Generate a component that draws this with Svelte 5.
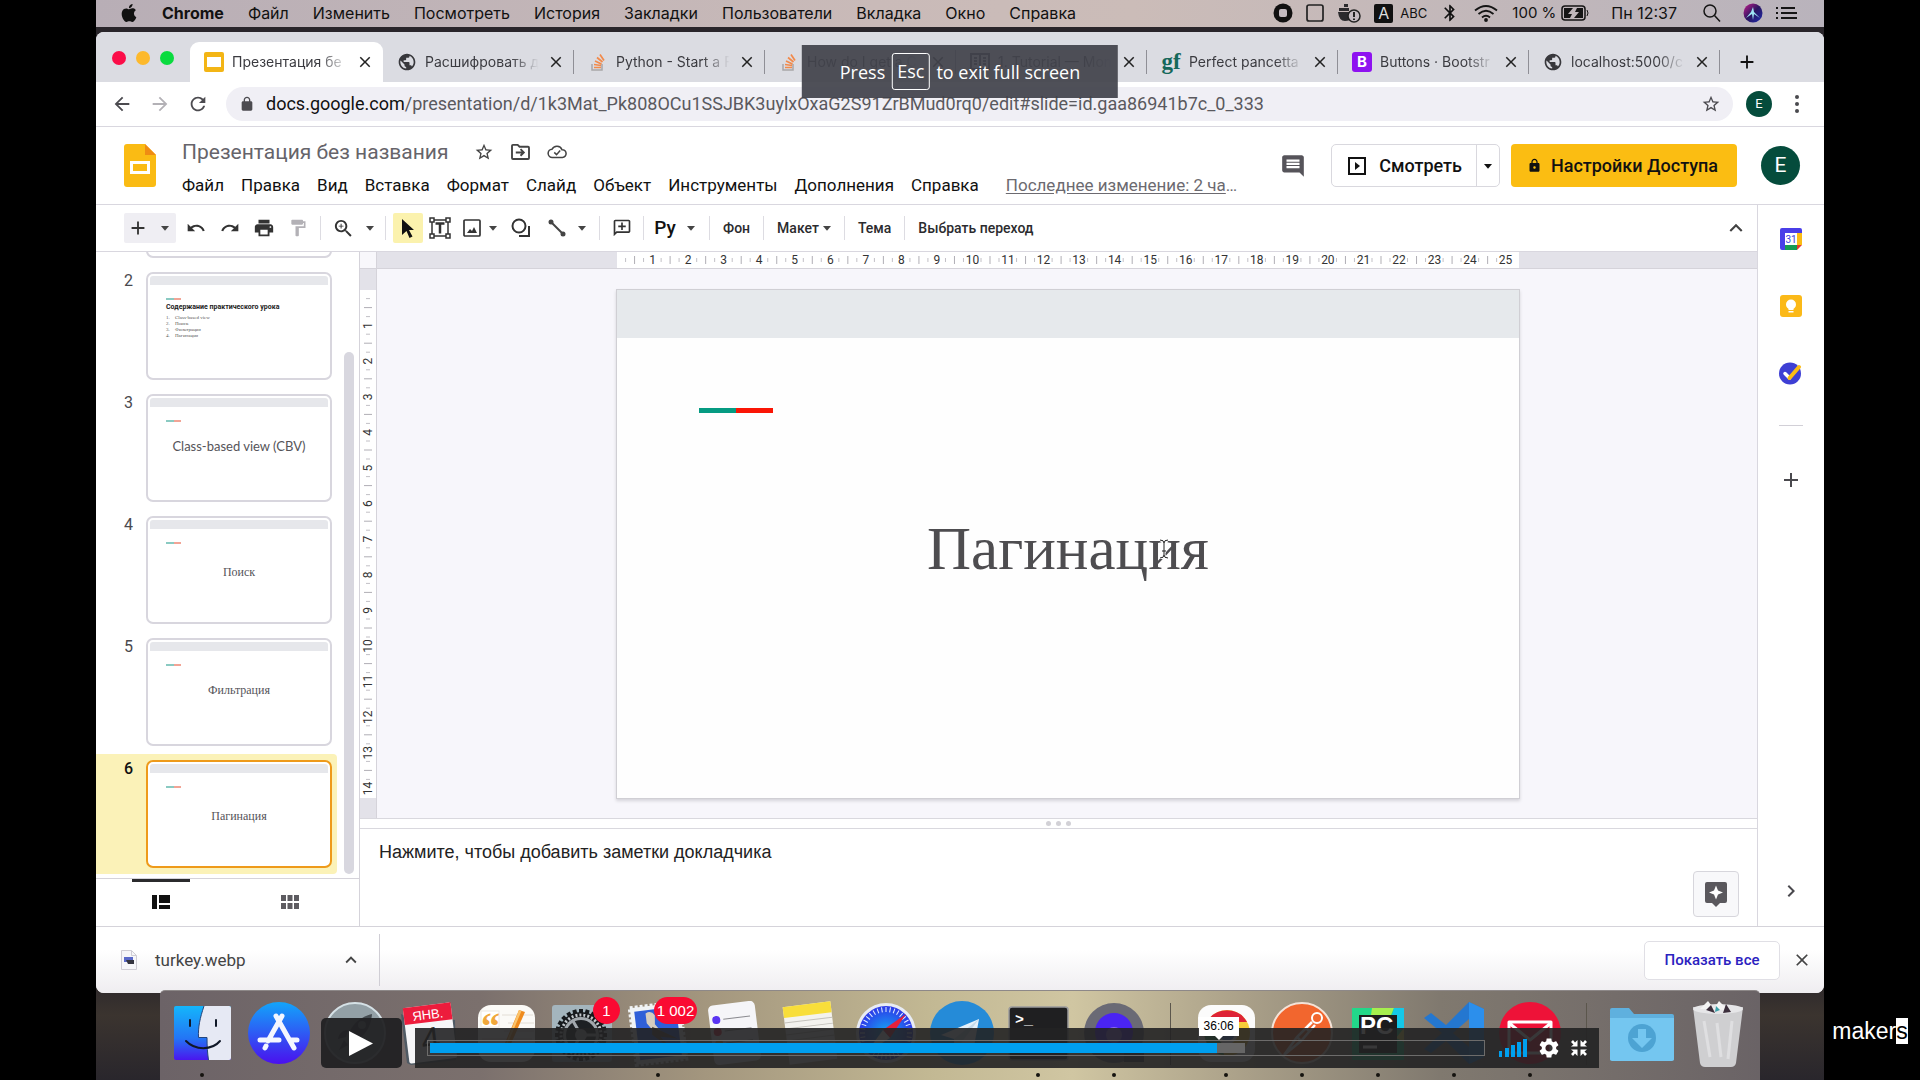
<script>
  const P = {
    star: 'M22 9.24l-7.19-.62L12 2 9.19 8.63 2 9.24l5.46 4.73L5.82 21 12 17.27 18.18 21l-1.63-7.03L22 9.24zM12 15.4l-3.76 2.27 1-4.28-3.32-2.88 4.38-.38L12 6.1l1.71 4.04 4.38.38-3.32 2.88 1 4.28L12 15.4z',
    back: 'M20 11H7.83l5.59-5.59L12 4l-8 8 8 8 1.41-1.41L7.83 13H20v-2z',
    forward: 'M12 4l-1.41 1.41L16.17 11H4v2h12.17l-5.58 5.59L12 20l8-8z',
    reload: 'M17.65 6.35C16.2 4.9 14.21 4 12 4c-4.42 0-7.99 3.58-7.99 8s3.57 8 7.99 8c3.73 0 6.84-2.55 7.73-6h-2.08c-.82 2.33-3.04 4-5.65 4-3.31 0-6-2.69-6-6s2.69-6 6-6c1.66 0 3.14.69 4.22 1.78L13 11h7V4l-2.35 2.35z',
    lock: 'M18 8h-1V6c0-2.76-2.24-5-5-5S7 3.24 7 6v2H6c-1.1 0-2 .9-2 2v10c0 1.1.9 2 2 2h12c1.1 0 2-.9 2-2V10c0-1.1-.9-2-2-2zM9 8V6c0-1.66 1.34-3 3-3s3 1.34 3 3v2H9z',
    lockHole: 'M18 8h-1V6c0-2.76-2.24-5-5-5S7 3.24 7 6v2H6c-1.1 0-2 .9-2 2v10c0 1.1.9 2 2 2h12c1.1 0 2-.9 2-2V10c0-1.1-.9-2-2-2zM9 8V6c0-1.66 1.34-3 3-3s3 1.34 3 3v2H9zm3 9c-1.1 0-2-.9-2-2s.9-2 2-2 2 .9 2 2-.9 2-2 2z',
    close: 'M19 6.41L17.59 5 12 10.59 6.41 5 5 6.41 10.59 12 5 17.59 6.41 19 12 13.41 17.59 19 19 17.59 13.41 12z',
    add: 'M19 13h-6v6h-2v-6H5v-2h6V5h2v6h6v2z',
    undo: 'M12.5 8c-2.65 0-5.05.99-6.9 2.6L2 7v9h9l-3.62-3.62c1.39-1.16 3.16-1.88 5.12-1.88 3.54 0 6.55 2.31 7.6 5.5l2.37-.78C21.08 11.03 17.15 8 12.5 8z',
    redo: 'M18.4 10.6C16.55 8.99 14.15 8 11.5 8c-4.65 0-8.58 3.03-9.96 7.22L3.9 16c1.05-3.19 4.05-5.5 7.6-5.5 1.95 0 3.73.72 5.12 1.88L13 16h9V7l-3.6 3.6z',
    print: 'M19 8H5c-1.66 0-3 1.34-3 3v6h4v4h12v-4h4v-6c0-1.66-1.34-3-3-3zm-3 11H8v-5h8v5zm3-7c-.55 0-1-.45-1-1s.45-1 1-1 1 .45 1 1-.45 1-1 1zm-1-9H6v4h12V3z',
    paint: 'M18 4V3c0-.55-.45-1-1-1H5c-.55 0-1 .45-1 1v4c0 .55.45 1 1 1h12c.55 0 1-.45 1-1V6h1v4H9v11c0 .55.45 1 1 1h2c.55 0 1-.45 1-1v-9h8V4h-3z',
    zoom: 'M15.5 14h-.79l-.28-.27C15.41 12.59 16 11.11 16 9.5 16 5.91 13.09 3 9.5 3S3 5.91 3 9.5 5.91 16 9.5 16c1.61 0 3.09-.59 4.23-1.57l.27.28v.79l5 4.99L20.49 19l-4.99-5zm-6 0C7.01 14 5 11.99 5 9.5S7.01 5 9.5 5 14 7.01 14 9.5 11.99 14 9.5 14zm2.5-4h-2v2H9v-2H7V9h2V7h1v2h2v1z',
    comment: 'M21.99 4c0-1.1-.89-2-1.99-2H4c-1.1 0-2 .9-2 2v12c0 1.1.9 2 2 2h14l4 4-.01-18zM18 14H6v-2h12v2zm0-3H6V9h12v2zm0-3H6V6h12v2z',
    addComment: 'M20 2H4c-1.1 0-2 .9-2 2v18l4-4h14c1.1 0 2-.9 2-2V4c0-1.1-.9-2-2-2zm0 14H5.2L4 17.2V4h16v12zM11 5.500h2V9h3.500v2H13v3.500h-2V11H7.500V9H11z',
    up: 'M12 8l-6 6 1.41 1.41L12 10.83l4.59 4.58L18 14z',
    right: 'M10 6L8.59 7.41 13.17 12l-4.58 4.59L10 18l6-6z',
    caret: 'M6 9l6 7 6-7z',
    globe: 'M12 2C6.48 2 2 6.48 2 12s4.48 10 10 10 10-4.48 10-10S17.52 2 12 2zm-1 17.93c-3.95-.49-7-3.85-7-7.93 0-.62.08-1.21.21-1.79L9 15v1c0 1.1.9 2 2 2v1.93zm6.9-2.54c-.26-.81-1-1.39-1.9-1.39h-1v-3c0-.55-.45-1-1-1H8v-2h2c.55 0 1-.45 1-1V7h2c1.1 0 2-.9 2-2v-.41c2.93 1.19 5 4.06 5 7.41 0 2.08-.8 3.97-2.1 5.39z',
    bluetooth: 'M17.71 7.71L12 2h-1v7.59L6.41 5 5 6.41 10.59 12 5 17.59 6.41 19 11 14.41V22h1l5.71-5.71-4.3-4.29 4.3-4.29zM13 5.83l1.88 1.88L13 9.59V5.83zm1.88 10.46L13 18.17v-3.76l1.88 1.88z',
    gear: 'M19.14 12.94c.04-.3.06-.61.06-.94 0-.32-.02-.64-.07-.94l2.03-1.58c.18-.14.23-.41.12-.61l-1.92-3.32c-.12-.22-.37-.29-.59-.22l-2.39.96c-.5-.38-1.03-.7-1.62-.94l-.36-2.54c-.04-.24-.24-.41-.48-.41h-3.84c-.24 0-.43.17-.47.41l-.36 2.54c-.59.24-1.13.57-1.62.94l-2.39-.96c-.22-.08-.47 0-.59.22L2.74 8.87c-.12.21-.08.47.12.61l2.03 1.58c-.05.3-.09.63-.09.94s.02.64.07.94l-2.03 1.58c-.18.14-.23.41-.12.61l1.92 3.32c.12.22.37.29.59.22l2.39-.96c.5.38 1.03.7 1.62.94l.36 2.54c.05.24.24.41.48.41h3.84c.24 0 .44-.17.47-.41l.36-2.54c.59-.24 1.13-.56 1.62-.94l2.39.96c.22.08.47 0 .59-.22l1.92-3.32c.12-.22.07-.47-.12-.61l-2.01-1.58zM12 15.6c-1.98 0-3.6-1.62-3.6-3.6s1.62-3.6 3.6-3.6 3.6 1.62 3.6 3.6-1.62 3.6-3.6 3.6z',
    apple: 'M12.152 6.896c-.948 0-2.415-1.078-3.96-1.04-2.04.027-3.91 1.183-4.961 3.014-2.117 3.675-.546 9.103 1.519 12.09 1.013 1.454 2.208 3.09 3.792 3.039 1.52-.065 2.09-.987 3.935-.987 1.831 0 2.35.987 3.96.948 1.637-.026 2.676-1.48 3.676-2.948 1.156-1.688 1.636-3.325 1.662-3.415-.039-.013-3.182-1.221-3.22-4.857-.026-3.04 2.48-4.494 2.597-4.559-1.429-2.09-3.623-2.324-4.39-2.376-2-.156-3.675 1.09-4.61 1.09zM15.53 3.83c.843-1.012 1.4-2.427 1.245-3.83-1.207.052-2.662.805-3.532 1.818-.78.896-1.454 2.338-1.273 3.714 1.338.104 2.715-.688 3.559-1.701'
  };

  const macMenus = ['Файл', 'Изменить', 'Посмотреть', 'История', 'Закладки', 'Пользователи', 'Вкладка', 'Окно', 'Справка'];
  const docMenus = ['Файл', 'Правка', 'Вид', 'Вставка', 'Формат', 'Слайд', 'Объект', 'Инструменты', 'Дополнения', 'Справка'];

  const tabs = [
    { icon: 'slides', title: 'Презентация бе', active: true },
    { icon: 'globe', title: 'Расшифровать д' },
    { icon: 'stack', title: 'Python - Start a F' },
    { icon: 'stack', title: 'How do I get a C' },
    { icon: 'docs', title: '1. Tutorial — Mon' },
    { icon: 'gf', title: 'Perfect pancetta' },
    { icon: 'boot', title: 'Buttons · Bootstr' },
    { icon: 'globe', title: 'localhost:5000/c' }
  ];

  const slides = [
    { n: 1, text: '' },
    { n: 2, list: ['Class-based view', 'Поиск', 'Фильтрация', 'Пагинация'], heading: 'Содержание практического урока' },
    { n: 3, text: 'Class-based view (CBV)', sans: true, raised: true },
    { n: 4, text: 'Поиск' },
    { n: 5, text: 'Фильтрация', raised: true },
    { n: 6, text: 'Пагинация', selected: true }
  ];

  const dock = [
    { k: 'finder', dot: true }, { k: 'appstore' }, { k: 'launchpad' }, { k: 'calendar' }, { k: 'pages' },
    { k: 'settings', badge: '1' }, { k: 'mail', badge: '1 002', dot: true }, { k: 'reminders' }, { k: 'notes' },
    { k: 'safari' }, { k: 'telegram' }, { k: 'terminal', dot: true }, { k: 'quicktime', dot: true }, { k: 'sep' },
    { k: 'chrome', dot: true }, { k: 'postman', dot: true }, { k: 'pycharm', dot: true }, { k: 'vscode', dot: true },
    { k: 'spark', dot: true }, { k: 'sep' }, { k: 'folder' }, { k: 'trash' }
  ];

  const CM = 35.6;
  const hTicks = Array.from({ length: 25 }, (_, i) => i + 1);
  const vTicks = Array.from({ length: 14 }, (_, i) => i + 1);
  const spokes = Array.from({ length: 36 }, (_, i) => i * 10);
  const teeth = Array.from({ length: 24 }, (_, i) => i * 15);

  let position = $state(748);
  const loaded = 775;
</script>

{#snippet icon(d, size)}
  <svg class="ico" width={size} height={size} viewBox="0 0 24 24" aria-hidden="true"><path {d} fill="currentColor" fill-rule="evenodd" /></svg>
{/snippet}

{#snippet caret()}
  <svg class="ico" width="16" height="16" viewBox="0 0 24 24" aria-hidden="true"><path d={P.caret} fill="#444" /></svg>
{/snippet}

{#snippet favicon(kind)}
  {#if kind === 'slides'}
    <svg width="20" height="20" viewBox="0 0 20 20"><rect width="20" height="20" rx="2" fill="#f3b515" /><rect x="3" y="5" width="14" height="10" fill="#fff" /></svg>
  {:else if kind === 'globe'}
    <span class="globe">{@render icon(P.globe, 20)}</span>
  {:else if kind === 'stack'}
    <svg width="20" height="20" viewBox="0 0 20 20" fill="none"><path d="M4 12v6h10v-6" stroke="#a9a6a8" stroke-width="1.500" /><path d="M6 15.500h7M6 12.500l7 1M7 9l6.500 3M9 5.500l5.500 4.500M12 2.500l4 6" stroke="#f28a4b" stroke-width="1.700" /></svg>
  {:else if kind === 'docs'}
    <svg width="20" height="20" viewBox="0 0 20 20" fill="none" stroke="#2b3038" stroke-width="2"><path d="M1 2h18v15H1zM10 2v16M4 6h3M4 9h3M4 12h3M13 6h3M13 9h3M13 12h3" /></svg>
  {:else if kind === 'gf'}
    <span class="gf">gf</span>
  {:else}
    <span class="boot">B</span>
  {/if}
{/snippet}

{#snippet dockArt(k)}
  <svg width="64" height="66" viewBox="0 0 64 66" aria-hidden="true">
    {#if k === 'finder'}
      <rect x="4" y="5" width="57" height="54" rx="2" fill="url(#gFinder)" />
      <path d="M34 5c-4 12-6 21-5.500 31.500H37c0 9 .5 16 1.500 22.500H59a2 2 0 0 0 2-2V7a2 2 0 0 0-2-2z" fill="#e6e9f4" />
      <path d="M34 5c-4 12-6 21-5.500 31.500H37c0 9 .5 16 1.500 22.500" fill="none" stroke="#24457c" />
      <path d="M20 19v6M46 19v6M16 40c9 9.500 26 9.500 34 0" stroke="#101828" stroke-width="2" fill="none" stroke-linecap="round" />
    {:else if k === 'appstore'}
      <circle cx="33" cy="32" r="31" fill="url(#gStore)" />
      <g stroke="#f4f6ff" stroke-width="5" stroke-linecap="round"><path d="M36 15L22 40M30 15l18 32M14 39h19M44 39h7M20 45l-1 2" /></g>
    {:else if k === 'launchpad'}
      <circle cx="33" cy="32" r="30" fill="#93a0a6" stroke="#d5e1e6" stroke-width="2" />
      <path d="M50 13C38 16 31 23 27 32l7 7c9-4 15-13 16-26zM26 29c-6 0-9 4-10 9l8-2zM37 40c0 6-4 9-9 10l2-8zM22 39l-5 10 9-5z" fill="#454b50" />
      <circle cx="40" cy="24" r="4" fill="#93a0a6" />
    {:else if k === 'calendar'}
      <path d="M5 14l-2-1 6 49 4 2 45-5-1-40z" fill="#4f5a64" />
      <g transform="rotate(-7 32 32)"><rect x="8" y="4" width="48" height="56" rx="2" fill="#f6f6f8" /><path d="M8 4h48v17H8z" fill="#ed1c3c" /><text x="32" y="18" font-size="13" text-anchor="middle" fill="#fff">ЯНВ.</text><text x="32" y="50" font-size="34" text-anchor="middle" fill="#222">4</text></g>
    {:else if k === 'pages'}
      <rect x="4" y="4" width="57" height="57" rx="13" fill="#fbfaf7" />
      <path d="M28 14h31M34 22h26M30 30h30M8 38h50M8 46h50" stroke="#e3ded6" />
      <rect x="7" y="10" width="18" height="16" fill="#fff" stroke="#ece7df" />
      <text x="7" y="38" font-size="38" font-weight="700" fill="#f0a73a" class="quote">“</text>
      <path d="M45 9l6 2-15 34-5 4v-7z" fill="#ef8b1e" /><path d="M45 9l2.500 1L33 44l-2 1z" fill="#fbc46c" />
    {:else if k === 'settings'}
      <rect x="2" y="4" width="60" height="57" rx="3" fill="#a4b5bd" />
      <g fill="#16191c"><circle cx="31" cy="34" r="23" />{#each teeth as t}<path d="M29 8h4v6h-4z" transform="rotate({t} 31 34)" />{/each}</g>
      <circle cx="31" cy="34" r="20" fill="none" stroke="#c3c8cc" stroke-width="3" stroke-dasharray="2 2" />
      <circle cx="31" cy="34" r="18" fill="#a2a8ad" /><circle cx="31" cy="34" r="15" fill="#1d2023" />
      <g stroke="#a2a8ad" stroke-width="3"><path d="M31 34l-8-14M31 34h16M31 34l-8 14" /></g><circle cx="31" cy="34" r="6" fill="#a2a8ad" />
    {:else if k === 'mail'}
      <g transform="rotate(-7 32 32)"><rect x="7" y="4" width="50" height="57" fill="#f0f3f5" stroke="#f0f3f5" stroke-width="4" stroke-dasharray="3 2" /><rect x="11" y="8" width="42" height="49" fill="#2f5fd8" /><path d="M22 11q6-3 9 3l-1 9 6 9-8-2-6-9z" fill="#d6cdbf" /><path d="M27 25l24 15-17-4 10 14-18-17z" fill="#5a4d40" /></g>
    {:else if k === 'reminders'}
      <g transform="rotate(-7 32 32)"><rect x="9" y="2" width="47" height="60" rx="5" fill="#f5f5f8" /><path d="M23 17h27M23 29h27M23 41h27" stroke="#8b8b90" /><circle cx="16" cy="17" r="4" fill="#5a34f2" /><circle cx="16" cy="29" r="4" fill="#e8213c" /><circle cx="16" cy="41" r="4" fill="#f2982c" /></g>
    {:else if k === 'notes'}
      <g transform="rotate(-7 32 32)"><rect x="8" y="3" width="48" height="58" fill="#f3f2ee" /><path d="M8 3h48v11H8z" fill="#f8de3a" /><path d="M8 19h48M8 25h48M8 31h48M8 37h48M8 43h48M8 49h48" stroke="#c3c1bb" /></g>
    {:else if k === 'safari'}
      <circle cx="32" cy="32" r="30" fill="#e8ecf4" /><circle cx="32" cy="32" r="27" fill="url(#gSafari)" />
      {#each spokes as s}<path d="M32 6v5" stroke="#e2ecff" transform="rotate({s} 32 32)" />{/each}
      <path d="M52 13L36 37l-7-8z" fill="#e5203c" /><path d="M12 52l17-23 7 8z" fill="#eef1f7" />
    {:else if k === 'telegram'}
      <circle cx="32" cy="32" r="32" fill="#258bd8" /><path d="M11 34l38-16-6 33-12-9-6 6-1-10z" fill="#e4f0fa" /><path d="M24 38l25-20-18 24-6 6z" fill="#c3d9ea" />
    {:else if k === 'terminal'}
      <rect x="3" y="6" width="59" height="53" rx="3" fill="#1f1f21" stroke="#9a9a9c" stroke-width="1.500" /><text x="9" y="23" font-size="15" font-weight="700" fill="#fff" class="mono">&gt;_</text>
    {:else if k === 'quicktime'}
      <circle cx="32" cy="32" r="30" fill="#6a6a75" /><path d="M42 44h20v17H42z" fill="#4a4a50" /><circle cx="32" cy="31" r="19" fill="#4a24f2" /><circle cx="32" cy="34" r="8" fill="#8c6cf0" />
    {:else if k === 'chrome'}
      <rect x="4" y="4" width="57" height="57" rx="13" fill="#fbfbfb" /><circle cx="33" cy="32" r="23" fill="#f7cd3a" /><path d="M13 21a23 23 0 0 1 40 0H33z" fill="#de2436" /><path d="M11 25l15 12 4 17A23 23 0 0 1 11 25z" fill="#2e9b57" /><circle cx="33" cy="32" r="11" fill="#fff" /><circle cx="33" cy="32" r="8" fill="#4583ec" />
    {:else if k === 'postman'}
      <circle cx="32" cy="32" r="30" fill="#f2662e" stroke="#f4e3d8" stroke-width="2" /><circle cx="47" cy="17" r="5" fill="none" stroke="#fff" stroke-width="2" /><path d="M42 21L27 36l-13 18 17-14 14-16M27 36l4 4M36 27l4 4" fill="none" stroke="#fff" stroke-width="2.500" />
    {:else if k === 'pycharm'}
      <rect x="6" y="7" width="52" height="52" fill="#22d88a" /><path d="M26 7h22l-6 14H24z" fill="#a6ef4e" /><path d="M48 7h10v22H42z" fill="#14c8e8" /><path d="M58 27v14l-8-4z" fill="#f3e95c" /><rect x="13" y="14" width="38" height="38" fill="#1c1c1d" /><text x="14" y="33" font-size="24" font-weight="700" fill="#fff">PC</text><path d="M17 46h14" stroke="#fff" stroke-width="3" />
    {:else if k === 'vscode'}
      <path d="M47 1l15 7v48l-15 7L24 40 9 52l-7-4 18-16L2 17l7-5 15 12zM47 18L31 32l16 14z" fill="#2477d0" fill-rule="evenodd" /><path d="M47 1l15 7v48l-15 7z" fill="#2c8fec" />
    {:else if k === 'spark'}
      <circle cx="32" cy="32" r="31" fill="#ee1238" /><path d="M11 21h42v31H11zM11 22l21 17 21-17" fill="none" stroke="#fff" stroke-width="3" stroke-linejoin="round" />
    {:else if k === 'folder'}
      <path d="M0 9q0-2 2-2h17l5 6h38q2 0 2 2v44H0z" fill="#5fb0de" /><path d="M0 17h64v41q0 2-2 2H2q-2 0-2-2z" fill="#74c6f0" /><circle cx="32" cy="37" r="14" fill="#4da3d3" /><path d="M28 28h8v9h6L32 47 22 37h6z" fill="#74c6f0" />
    {:else}
      <path d="M7 6h50l-7 56q-1 4-5 4H19q-4 0-5-4z" fill="#cfcfd1" /><ellipse cx="32" cy="8" rx="25" ry="5" fill="#e6e6e8" /><path d="M14 8l8-8 6 8 5-8 9 9z" fill="#f4f4f4" /><path d="M20 9l5-5 4 8zM40 3l5 8-8 1z" fill="#3c2f3c" /><path d="M30 5l4 4-5 2z" fill="#3da0a8" /><path d="M18 20l6 36M46 20l-4 38M31 22l4 34" stroke="#e6e6e8" stroke-width="3" opacity=".7" />
    {/if}
  </svg>
{/snippet}

<svg class="defs" width="0" height="0" aria-hidden="true">
  <defs>
    <linearGradient id="gFinder" x1="0" y1="0" x2="0" y2="1"><stop offset="0" stop-color="#14b6fb" /><stop offset=".6" stop-color="#2375f5" /><stop offset="1" stop-color="#4a16ee" /></linearGradient>
    <linearGradient id="gStore" x1="0" y1="0" x2="0" y2="1"><stop offset="0" stop-color="#12a5fa" /><stop offset="1" stop-color="#4a10ee" /></linearGradient>
    <radialGradient id="gSafari"><stop offset="0" stop-color="#16a9f5" /><stop offset="1" stop-color="#2c39e8" /></radialGradient>
    <linearGradient id="gSiri" x1="0" y1="0" x2="1" y2="1"><stop offset="0" stop-color="#c81e8e" /><stop offset=".5" stop-color="#2a1560" /><stop offset="1" stop-color="#1e2cb0" /></linearGradient>
  </defs>
</svg>

<div class="stage">
  <div class="desktop">
    <nav class="menubar">
      <span class="apple">{@render icon(P.apple, 18)}</span>
      <b>Chrome</b>
      {#each macMenus as m}<span>{m}</span>{/each}
      <div class="status">
        <svg width="20" height="20" viewBox="0 0 20 20"><circle cx="10" cy="10" r="9.500" fill="#111" /><rect x="6" y="6" width="8" height="8" rx="2" fill="#c4bbc1" /></svg>
        <svg width="18" height="18" viewBox="0 0 18 18"><rect x="1" y="1" width="16" height="16" rx="2" fill="none" stroke="#222" stroke-width="1.700" /></svg>
        <svg class="docker" width="24" height="20" viewBox="0 0 24 20"><path d="M1 9h14v6q-2 3-7 3-6 0-7-9zM2 5h10v3H2zM7 1h4v3H7z" fill="#2b2a2d" /><circle cx="17" cy="13" r="6" fill="#c4bbc1" stroke="#222" stroke-width="1.500" /><path d="M17 9v5M17 15.500v1.500" stroke="#222" stroke-width="2" /></svg>
        <span class="kbd"><i>A</i>ABC</span>
        {@render icon(P.bluetooth, 20)}
        <svg class="wifi" width="26" height="20" viewBox="0 0 26 20" fill="none" stroke="#151515" stroke-width="1.800"><path d="M2 7.500q11-9 22 0M5.500 11q7.500-6.500 15 0M9 14.500q4-3.500 8 0" /><circle cx="13" cy="17" r="1" fill="#151515" /></svg>
        <span class="power">100 %<svg width="28" height="16" viewBox="0 0 28 16"><rect x="1" y="1" width="23" height="14" rx="3" fill="none" stroke="#151515" stroke-width="1.500" /><path d="M3 3h9L7 9h4l-2 4H3zM22 13h-9L18 7h-4l2-4h6z" fill="#151515" /><path d="M26 5q2 3 0 6" stroke="#151515" fill="none" /></svg></span>
        <span class="clock">Пн 12:37</span>
        <svg class="find" width="20" height="20" viewBox="0 0 20 20" fill="none" stroke="#151515" stroke-width="1.500"><circle cx="8" cy="8" r="6" /><path d="M12.500 12.500l5.500 6" /></svg>
        <svg class="siri" width="20" height="20" viewBox="0 0 20 20"><circle cx="10" cy="10" r="9.500" fill="url(#gSiri)" /><path d="M3 15l5-6 2-5 1 5 6 6-6-4-1 6-1-6z" fill="#9fe4f4" /></svg>
        <svg width="22" height="14" viewBox="0 0 22 14" stroke="#151515" stroke-width="2"><path d="M0 2h2M5 2h14M0 7h2M5 7h16M0 12h2M5 12h16" /></svg>
      </div>
    </nav>

    <main class="window">
      <div class="tabstrip">
        <div class="lights"><i class="r"></i><i class="y"></i><i class="g"></i></div>
        {#each tabs as t}
          <div class="tab" class:active={t.active}>
            <span class="fav">{@render favicon(t.icon)}</span>
            <span class="ttl">{t.title}</span>
            <button class="bare" aria-label="Закрыть вкладку">{@render icon(P.close, 18)}</button>
          </div>
        {/each}
        <button class="bare newtab" aria-label="Новая вкладка">{@render icon(P.add, 22)}</button>
      </div>

      <div class="address">
        <button class="bare nav" aria-label="Назад">{@render icon(P.back, 22)}</button>
        <button class="bare nav dim" aria-label="Вперёд">{@render icon(P.forward, 22)}</button>
        <button class="bare nav" aria-label="Обновить">{@render icon(P.reload, 22)}</button>
        <div class="omni">
          {@render icon(P.lock, 16)}
          <a class="url" href="#url"><span>docs.google.com</span>/presentation/d/1k3Mat_Pk808OCu1SSJBK3uylxOxaG2S91ZrBMud0rq0/edit#slide=id.gaa86941b7c_0_333</a>
          <button class="bare" aria-label="Добавить в закладки">{@render icon(P.star, 20)}</button>
        </div>
        <button class="bare avatar small" aria-label="Профиль">E</button>
        <button class="bare dots" aria-label="Меню"><svg width="6" height="20" viewBox="0 0 6 20" fill="#4a4a4e"><circle cx="3" cy="3" r="2" /><circle cx="3" cy="10" r="2" /><circle cx="3" cy="17" r="2" /></svg></button>
      </div>

      <header class="dochead">
        <svg class="logo" width="32" height="43" viewBox="0 0 32 43"><path d="M3 0h18l11 11v29q0 3-3 3H3q-3 0-3-3V3q0-3 3-3z" fill="#fabb14" /><path d="M21 0l11 11H21z" fill="#ef8c13" /><path d="M7.500 18.500h17v10h-17z" fill="none" stroke="#fff" stroke-width="3" /></svg>
        <div class="names">
          <div class="titleline">
            <h1>Презентация без названия</h1>
            <button class="bare" aria-label="Пометить">{@render icon(P.star, 20)}</button>
            <button class="bare" aria-label="Переместить"><svg width="19" height="17" viewBox="0 0 20 18" fill="none" stroke="#444" stroke-width="2"><path d="M1 3q0-1 1-1h5l2 2h9q1 0 1 1v11q0 1-1 1H2q-1 0-1-1zM5 10h8M10 6.500l3.500 3.500-3.500 3.500" /></svg></button>
            <button class="bare" aria-label="Сохранено"><svg width="20" height="17" viewBox="0 0 22 18" fill="none" stroke="#444" stroke-width="1.700"><path d="M6 15.500a4.500 4.500 0 0 1-.5-9A6 6 0 0 1 16.500 7a4.200 4.200 0 0 1 .5 8.500zM8 10l2.500 2.500 4-4.500" /></svg></button>
          </div>
          <div class="menus">
            {#each docMenus as m}<button class="bare">{m}</button>{/each}
            <a href="#history"><u>Последнее изменение: 2 ча</u>…</a>
          </div>
        </div>
        <button class="bare commentbtn" aria-label="Комментарии">{@render icon(P.comment, 26)}</button>
        <div class="present">
          <button><svg width="18" height="18" viewBox="0 0 18 18"><rect x="1" y="1" width="16" height="16" fill="none" stroke="#111" stroke-width="2" /><path d="M7 5l5 4-5 4z" fill="#111" /></svg>Смотреть</button>
          <button class="more" aria-label="Варианты показа">{@render icon(P.caret, 16)}</button>
        </div>
        <button class="share">{@render icon(P.lockHole, 15)}Настройки Доступа</button>
        <button class="bare avatar" aria-label="Аккаунт">E</button>
      </header>

      <div class="docbody">
        <div class="work">
          <div class="toolbar">
            <div class="grp">
              <button class="bare new" aria-label="Новый слайд">{@render icon(P.add, 22)}{@render caret()}</button>
              <button class="bare t34" aria-label="Отменить">{@render icon(P.undo, 20)}</button>
              <button class="bare t34" aria-label="Повторить">{@render icon(P.redo, 20)}</button>
              <button class="bare t34" aria-label="Печать">{@render icon(P.print, 22)}</button>
              <button class="bare t34 dim" aria-label="Копировать форматирование">{@render icon(P.paint, 20)}</button>
            </div>
            <div class="grp g2">
              <button class="bare t34" aria-label="Масштаб">{@render icon(P.zoom, 23)}</button>
              <button class="bare t20" aria-label="Выбрать масштаб">{@render caret()}</button>
            </div>
            <div class="grp g3">
              <button class="bare sel" aria-label="Выбрать"><svg width="14" height="20" viewBox="0 0 14 20"><path d="M1 1l12 11H8l3.500 6.500-3 1.500L5.500 13 1 17z" fill="#111" /></svg></button>
              <button class="bare t34" aria-label="Текстовое поле"><svg width="22" height="22" viewBox="0 0 22 22" fill="none" stroke="#333" stroke-width="1.500"><path d="M3 3h16v16H3z" /><path d="M6.500 6.500h9M11 6.500v10" stroke-width="2.500" /><g fill="#fff"><path d="M1 1h4v4H1zM17 1h4v4h-4zM1 17h4v4H1zM17 17h4v4h-4z" /></g></svg></button>
              <button class="bare t30" aria-label="Изображение"><svg width="18" height="18" viewBox="0 0 18 18"><rect x="1" y="1" width="16" height="16" rx="1" fill="none" stroke="#333" stroke-width="1.700" /><path d="M4 14l3-4 2 2 2-4 3 6z" fill="#333" /></svg></button>
              <button class="bare t12" aria-label="Вставить изображение">{@render caret()}</button>
              <button class="bare t44" aria-label="Фигура"><svg width="20" height="20" viewBox="0 0 20 20" fill="none" stroke="#333" stroke-width="2"><circle cx="8" cy="8" r="6.500" /><path d="M18 8v10H8" /></svg></button>
              <button class="bare t30" aria-label="Линия"><svg width="18" height="18" viewBox="0 0 18 18"><path d="M3 3l12 12" stroke="#444" stroke-width="2" /><circle cx="3" cy="3" r="2.500" fill="#444" /><circle cx="15" cy="15" r="2.500" fill="#444" /></svg></button>
              <button class="bare t20" aria-label="Выбрать линию">{@render caret()}</button>
            </div>
            <div class="grp"><button class="bare t44" aria-label="Добавить комментарий">{@render icon(P.addComment, 20)}</button></div>
            <div class="grp"><button class="bare lang" aria-label="Способ ввода"><span>Ру</span>{@render caret()}</button></div>
            <div class="grp"><button class="bare word">Фон</button></div>
            <div class="grp"><button class="bare word">Макет{@render caret()}</button></div>
            <div class="grp"><button class="bare word">Тема</button></div>
            <div class="grp last"><button class="bare word">Выбрать переход</button></div>
            <button class="bare collapse" aria-label="Скрыть меню">{@render icon(P.up, 26)}</button>
          </div>

          <div class="panes">
            <aside class="film">
              <div class="listwrap">
                <ol>
                  {#each slides as s}
                    <li class:selected={s.selected}>
                      <span class="num">{s.n}</span>
                      <div class="thumb">
                        <div class="band"></div>
                        <div class="accent"></div>
                        {#if s.list}
                          <div class="mini"><strong>{s.heading}</strong>
                            {#each s.list as l, i}<p><span>{i + 1}.</span>{l}</p>{/each}
                          </div>
                        {:else}
                          <p class="cap" class:sans={s.sans} class:raised={s.raised}>{s.text}</p>
                        {/if}
                      </div>
                    </li>
                  {/each}
                </ol>
                <div class="scroll"><div class="knob"></div></div>
              </div>
              <div class="views">
                <button class="bare on" aria-label="Лента слайдов"><svg width="18" height="14" viewBox="0 0 18 14"><path d="M0 0h5v14H0zM7 0h11v8H7zM7 10h11v4H7z" fill="#111" /></svg></button>
                <button class="bare" aria-label="Сетка"><svg width="18" height="14" viewBox="0 0 18 14"><path d="M0 0h5v6H0zM6.500 0h5v6h-5zM13 0h5v6h-5zM0 8h5v6H0zM6.500 8h5v6h-5zM13 8h5v6h-5z" fill="#5d5b60" /></svg></button>
              </div>
            </aside>

            <section class="editor">
              <div class="corner"></div>
              <div class="hruler">
                <svg viewBox="0 0 904 16" height="16">
                  <rect width="904" height="16" fill="#fff" />
                  {#each hTicks as n}
                    <path d="M{n * CM - 18} 4v8" stroke="#b0aeb5" />
                    <path d="M{n * CM - 9} 6v4M{n * CM - 27} 6v4" stroke="#c2c0c6" />
                    <text x={n * CM} y="12" text-anchor="middle">{n}</text>
                  {/each}
                </svg>
              </div>
              <div class="vruler">
                <svg width="16" height="508" viewBox="0 0 16 508">
                  <rect width="16" height="508" fill="#fff" />
                  {#each vTicks as n}
                    <path d="M4 {n * CM - 18}h8" stroke="#b0aeb5" />
                    <path d="M6 {n * CM - 9}h4M6 {n * CM - 27}h4" stroke="#c2c0c6" />
                    <text transform="translate(12 {n * CM}) rotate(-90)" text-anchor="middle">{n}</text>
                  {/each}
                </svg>
              </div>
              <div class="canvas">
                <div class="slide">
                  <div class="sband"></div>
                  <div class="saccent"></div>
                  <h2>Пагинация</h2>
                  <svg class="ibeam" width="12" height="20" viewBox="0 0 12 20" fill="none" stroke="#fff" stroke-width="3"><path d="M2 1q4 0 4 3 0-3 4-3M6 4v12M2 19q4 0 4-3 0 3 4 3" /><path d="M2 1q4 0 4 3 0-3 4-3M6 4v12M2 19q4 0 4-3 0 3 4 3M4 12h4" stroke="#222" stroke-width="1" /></svg>
                </div>
              </div>
              <div class="split"><i></i><i></i><i></i></div>
              <div class="notes">
                <p>Нажмите, чтобы добавить заметки докладчика</p>
                <button class="explore" aria-label="Анализ данных"><svg width="22" height="25" viewBox="0 0 22 25"><path d="M2 0h18q2 0 2 2v17q0 2-2 2h-5l-4 4-4-4H2q-2 0-2-2V2q0-2 2-2z" fill="#5a585d" /><path d="M11 3.500l2 5 5 2-5 2-2 5-2-5-5-2 5-2z" fill="#fff" /></svg></button>
              </div>
            </section>
          </div>
        </div>

        <aside class="side">
          <button class="bare cal" aria-label="Календарь"><svg width="22" height="22" viewBox="0 0 22 22"><path d="M2 0h18q2 0 2 2v3H5v17H2q-2 0-2-2V2q0-2 2-2z" fill="#4a3ee8" /><path d="M17 5h5v12h-5z" fill="#fbbc14" /><path d="M5 17h12v5H5z" fill="#169b52" /><path d="M17 17h5l-5 5z" fill="#e5392d" /><path d="M5 5h12v12H5z" fill="#fff" /><text x="11" y="15" font-size="10" text-anchor="middle" fill="#3a3ee0">31</text></svg></button>
          <button class="bare" aria-label="Keep"><svg width="22" height="22" viewBox="0 0 22 22"><rect width="22" height="22" rx="3" fill="#fbb918" /><circle cx="11" cy="9.500" r="5" fill="#fff" /><path d="M8.500 13h5v2h-5zM8.500 16h5v1.500h-5z" fill="#fff" /></svg></button>
          <button class="bare" aria-label="Задачи"><svg width="24" height="24" viewBox="0 0 24 24"><circle cx="11" cy="12.500" r="11" fill="#3e3fd4" /><path d="M6 12.500l4.500 4.500" stroke="#fff" stroke-width="3.500" stroke-linecap="round" /><path d="M10.500 17L20 6" stroke="#fbbc14" stroke-width="4" stroke-linecap="round" /></svg></button>
          <hr />
          <button class="bare plus" aria-label="Установить дополнения">{@render icon(P.add, 24)}</button>
          <button class="bare hide" aria-label="Скрыть боковую панель">{@render icon(P.right, 24)}</button>
        </aside>
      </div>

      <footer class="downloads">
        <button class="bare file">
          <svg width="16" height="20" viewBox="0 0 16 20"><path d="M.5.500h10l5 5v14H.5z" fill="#f6f6f9" stroke="#cfcdd4" /><path d="M10.500.500v5h5" fill="none" stroke="#cfcdd4" /><path d="M3 7h9v5H3z" fill="#5a69c8" /><path d="M5 10h8v4H7z" fill="#34343f" /></svg>
          <span>turkey.webp</span>
          {@render icon(P.up, 22)}
        </button>
        <button class="all">Показать все</button>
        <button class="bare" aria-label="Закрыть">{@render icon(P.close, 20)}</button>
      </footer>
    </main>

    <div class="toast">Press <kbd>Esc</kbd> to exit full screen</div>

    <div class="dock">
      {#each dock as d}
        {#if d.k === 'sep'}
          <div class="dsep"></div>
        {:else}
          <div class="app">
            {@render dockArt(d.k)}
            {#if d.badge}<span class="badge" class:wide={d.badge.length > 1}>{d.badge}</span>{/if}
            {#if d.dot}<i class="run"></i>{/if}
          </div>
        {/if}
      {/each}
    </div>

    <div class="player">
      <button class="play" aria-label="Воспроизвести"><svg width="24" height="25" viewBox="0 0 24 25"><path d="M0 0l24 12.500L0 25z" fill="#fff" /></svg></button>
      <div class="controls">
        <div class="track">
          <input type="range" min="0" max="1000" bind:value={position} aria-label="Позиция" style="--pos:{position / 10}%;--load:{loaded / 10}%" />
          <span class="time" style="left:{position / 10}%">36:06</span>
        </div>
        <button class="bare" aria-label="Громкость"><svg width="28" height="18" viewBox="0 0 28 18" fill="#009fef"><path d="M0 12h3v6H0zM6 9h4v9H6zM12 6h4v12h-4zM18 3h4v15h-4zM24 0h4v18h-4z" /></svg></button>
        <button class="bare gear" aria-label="Настройки">{@render icon(P.gear, 24)}</button>
        <button class="bare" aria-label="Выйти из полноэкранного режима"><svg width="16" height="18" viewBox="0 0 16 18" fill="#fff"><path d="M6.500 1v6.500H0L2.500 5.500 0 3l2-2 2 2.500zM9.500 1v6.500H16l-2.500-2L16 3l-2-2-2 2.500zM6.500 17v-6.500H0l2.500 2L0 15l2 2 2-2.500zM9.500 17v-6.500H16l-2.500 2L16 15l-2 2-2-2.500z" /></svg></button>
      </div>
    </div>
  </div>

  <div class="brand">maker<mark>s</mark></div>
</div>

<style>
  :global(body) { margin: 0; background: #000; }
  * { box-sizing: border-box; }
  p, h1, h2, ol { margin: 0; padding: 0; font-weight: 400; }
  .defs { position: absolute; }
  .stage { display: grid; grid-template-columns: 5% 1fr 5%; min-height: 100vh; background: #000; font-family: Roboto, 'Liberation Sans', sans-serif; color: #111; }
  .desktop { grid-column: 2; position: relative; display: flex; flex-direction: column; min-width: 0; overflow: hidden; background: linear-gradient(#29252a 0 90%, #3b342f 94%, #29262c); }
  .bare { border: 0; background: none; padding: 0; margin: 0; font: inherit; color: inherit; display: flex; align-items: center; justify-content: center; }
  .ico, svg { display: block; flex: none; }

  .menubar { display: flex; align-items: center; gap: 24px; height: 27px; margin-bottom: 5px; padding: 0 26px 1px 24px; background: linear-gradient(90deg, #b8aeb6, #c9bab8 45%, #cbbcb8 60%, #b9b3bc); font: 16px/26px Inter, 'Liberation Sans', sans-serif; white-space: nowrap; }
  .menubar b { font-weight: 700; }
  .status { margin-left: auto; display: flex; align-items: center; gap: 13px; font-size: 15px; }
  .kbd { display: flex; align-items: center; gap: 7px; font-size: 13px; }
  .kbd i { background: #111; color: #ddd; font: 16px/19px Inter, sans-serif; width: 19px; text-align: center; border-radius: 2px; }
  .power { display: flex; align-items: center; gap: 5px; }
  .clock { margin-left: 9px; font-size: 16px; }
  .find { margin-left: 12px; }
  .siri { margin-left: 8px; }

  .window { flex: 1; display: flex; flex-direction: column; margin-bottom: 87px; background: #fff; border-radius: 8px; overflow: hidden; min-height: 0; }
  .tabstrip { display: flex; align-items: stretch; height: 50px; padding-top: 10px; background: #dbdce2; font: 14px/34px Inter, 'Liberation Sans', sans-serif; }
  .lights { display: flex; align-items: center; gap: 10px; width: 94px; padding: 0 0 8px 16px; }
  .lights i { width: 14px; height: 14px; border-radius: 50%; background: #fb0d48; }
  .lights .y { background: #fdb92c; }
  .lights .g { background: #0adb3f; }
  .tab { display: flex; align-items: center; gap: 6px; flex: 0 1 191px; min-width: 0; padding: 0 9px 0 14px; color: #3b3b40; background: linear-gradient(#8f8f96, #8f8f96) right 8px / 1px 24px no-repeat; }
  .tab.active { flex-basis: 193px; background: #fff; border-radius: 9px 9px 0 0; }
  .tab .bare { color: #222; }
  .fav { width: 20px; display: flex; justify-content: center; color: #38383c; }
  .gf { font: 700 23px/26px 'Liberation Serif', serif; color: #15685a; }
  .boot { width: 20px; background: #8e12f0; color: #fff; font: 700 15px/20px Inter, sans-serif; text-align: center; border-radius: 3px; }
  .ttl { flex: 1; min-width: 0; padding-left: 2px; overflow: hidden; white-space: nowrap; mask-image: linear-gradient(90deg, #000 75%, transparent 98%); }
  .newtab { margin-left: 16px; }

  .address { display: flex; align-items: center; height: 45px; padding: 0 24px 0 7px; border-bottom: 1px solid #d9d7df; color: #4c4b50; }
  .nav { width: 38px; }
  .dim { color: #b3b1b6; }
  .omni { flex: 1; display: flex; align-items: center; gap: 11px; height: 34px; margin-left: 9px; padding: 0 12px 0 13px; border-radius: 17px; background: #f0eff5; min-width: 0; }
  .url { flex: 1; min-width: 0; overflow: hidden; white-space: nowrap; font-size: 18px; line-height: 24px; color: #5a595e; text-decoration: none; }
  .url span { color: #111; }
  .avatar { width: 39px; height: 39px; border-radius: 50%; background: #054c3c; color: #fff; font: 21px/39px Roboto, sans-serif; }
  .avatar.small { width: 26px; height: 26px; margin: 0 22px 0 13px; font-size: 13px; line-height: 26px; }

  .dochead { display: flex; align-items: center; height: 78px; padding: 0 24px 0 28px; border-bottom: 1px solid #d9d7df; }
  .names { flex: 1; min-width: 0; padding: 2px 0 0 26px; }
  .titleline { display: flex; align-items: center; gap: 17px; height: 36px; color: #444; }
  h1 { font-size: 21px; line-height: 30px; color: #66646a; margin-right: 8px; }
  .menus { display: flex; gap: 17px; font-size: 17px; line-height: 30px; white-space: nowrap; }
  .menus a { margin-left: 10px; color: #6c6a70; text-decoration: none; }
  .menus u { text-underline-offset: 2px; }
  .commentbtn { color: #56545a; margin-right: 25px; }
  .present { display: flex; height: 43px; border: 1px solid #d9d8de; border-radius: 5px; }
  .present button, .share { font: 500 18px/24px Roboto, sans-serif; color: #111; background: none; border: 0; display: flex; align-items: center; }
  .present button { gap: 13px; padding: 0 14px 0 16px; }
  .present .more { padding: 0 3px; border-left: 1px solid #d9d8de; }
  .share { height: 43px; margin: 0 24px 0 11px; padding: 0 19px 0 16px; gap: 9px; background: #fbbd12; border-radius: 4px; }

  .docbody { flex: 1; display: flex; min-height: 0; }
  .work { flex: 1; display: flex; flex-direction: column; min-width: 0; }
  .toolbar { display: flex; align-items: center; height: 47px; padding: 0 8px 0 28px; border-bottom: 1px solid #d9d7df; font: 500 14px/24px Roboto, sans-serif; color: #333; }
  .toolbar .bare { height: 30px; }
  .grp { display: flex; align-items: center; height: 24px; padding-right: 5px; border-right: 1px solid #dddce2; }
  .grp:nth-child(n + 4) { padding-right: 0; }
  .last { border: 0; }
  .new { width: 52px; margin-right: 3px; gap: 8px; background: #efeef3; border-radius: 2px; }
  .g2 { padding: 0 5px; }
  .g3 { padding: 0 7px; }
  .t34 { width: 34px; }
  .t30 { width: 30px; }
  .t20 { width: 20px; }
  .t12 { width: 12px; }
  .t44 { width: 43px; }
  .sel { width: 30px; background: #fbf2ae; border-radius: 2px; }
  .lang { width: 65px; gap: 7px; font-size: 19px; color: #111; }
  .word { padding: 0 13px; color: #2b2b2e; }
  .word .ico { margin-right: -4px; }
  .collapse { margin-left: auto; color: #444; }

  .panes { flex: 1; display: flex; min-height: 0; }
  .film { width: 264px; display: flex; flex-direction: column; border-right: 1px solid #d5d3da; }
  .listwrap { flex: 1; display: flex; min-height: 0; }
  ol { flex: 1; display: flex; flex-direction: column; justify-content: flex-end; gap: 2px; padding-bottom: 3px; list-style: none; overflow: hidden; height: 625px; }
  li { flex: none; display: flex; padding: 6px 5px 6px 0; border-radius: 0 4px 4px 0; }
  li.selected { background: #fbf2b8; }
  .num { width: 50px; padding-left: 28px; font-size: 16px; line-height: 18px; color: #4a494e; }
  .selected .num { font-weight: 500; color: #111; }
  .thumb { flex: 1; height: 108px; display: flex; flex-direction: column; padding: 2px; border: 2px solid #d8d6de; border-radius: 7px; background: #fff; }
  .selected .thumb { border-color: #ee9a1a; }
  .band { height: 9px; background: #e6e7eb; border-radius: 3px 3px 0 0; }
  .accent { width: 15px; height: 2px; margin: 13px 0 0 16px; background: linear-gradient(90deg, #7dc4bb 50%, #f09a8a 50%); opacity: .9; }
  .cap { flex: 1; padding-bottom: 20px; display: flex; align-items: center; justify-content: center; font: 12px/18px 'Liberation Serif', serif; color: #555459; }
  .cap.raised { padding-bottom: 29px; }
  .cap.sans { font: 13px/18px Lato, sans-serif; }
  .mini { padding: 3px 0 0 16px; font: 5px/6px 'Liberation Serif', serif; color: #555; }
  .mini strong { display: block; margin-bottom: 3px; font: 700 7px/9px Roboto, sans-serif; color: #222; white-space: nowrap; }
  .mini span { display: inline-block; width: 9px; }
  .scroll { width: 22px; padding: 100px 5px 4px 7px; display: flex; }
  .knob { flex: 1; border-radius: 5px; background: #d8d7df; }
  .views { display: grid; grid-template-columns: 1fr 1fr; height: 48px; padding-right: 4px; border-top: 1px solid #d5d3da; }
  .views .bare { border-top: 3px solid transparent; margin: 0 36px; padding-bottom: 5px; }
  .views .on { border-color: #2b2b2d; }

  .editor { flex: 1; display: grid; grid-template: 17px 1fr 11px 97px / 16px 1fr; min-width: 0; }
  .corner { background: #f8f7fb; border-bottom: 1px solid #d5d3da; }
  .hruler { display: flex; justify-content: center; padding-left: 2px; background: #e3e2e9; border: solid #d5d3da; border-width: 0 0 1px 1px; }
  .hruler svg { width: 65.5%; }
  .hruler text, .vruler text { font-size: 12px; fill: #333; }
  .vruler { display: flex; align-items: center; background: #e3e2e9; }
  .canvas { display: flex; justify-content: center; align-items: flex-start; padding: 21px 0 18px 2px; background: #f7f6fb; border-left: 1px solid #d5d3da; }
  .slide { position: relative; width: 65.5%; aspect-ratio: 16 / 9; display: flex; flex-direction: column; background: #fefefe; outline: 1px solid #d0cfd4; box-shadow: 0 2px 3px 1px #d5d4da; }
  .sband { height: 48px; background: #e6e9ec; }
  .saccent { width: 74px; height: 5px; margin: 70px 0 0 82px; background: linear-gradient(90deg, #059b82 50%, #fa1505 50%); }
  h2 { margin-top: 96px; text-align: center; font: 61px/80px 'Liberation Serif', serif; color: #4e4d50; }
  .ibeam { position: absolute; left: 60%; top: 49%; }
  .split { grid-column: 1 / 3; display: flex; justify-content: center; align-items: center; gap: 5px; border: solid #d9d8de; border-width: 1px 0; padding-left: 0; }
  .split i { width: 5px; height: 5px; border-radius: 50%; background: #d2d1d6; }
  .notes { grid-column: 1 / 3; display: flex; justify-content: space-between; padding: 11px 18px 0 19px; }
  .notes p { font: 18px/24px 'Liberation Sans', sans-serif; color: #222; }
  .explore { width: 46px; height: 46px; margin-top: 31px; padding: 0; display: flex; align-items: center; justify-content: center; background: #f8f8fa; border: 1px solid #d7d6dc; border-radius: 4px; }

  .side { width: 67px; display: flex; flex-direction: column; align-items: center; padding: 22px 0 20px; border-left: 1px solid #d9d7df; color: #4a494e; }
  .side .bare { width: 30px; height: 24px; margin-bottom: 43px; }
  .side hr { width: 24px; margin: -3px 0 42px; border: 0; border-top: 1px solid #d2d0d7; }
  .side .hide { margin: auto 0 0; height: 30px; }

  .downloads { display: flex; align-items: center; height: 67px; padding: 0 12px 0 25px; border-top: 1px solid #d5d3da; background: linear-gradient(#fff 35%, #efedf0); color: #444; }
  .file { width: 259px; height: 52px; padding-right: 17px; margin-right: auto; border-right: 1px solid #d0ced5; font-size: 17px; }
  .file span { flex: 1; padding-left: 18px; text-align: left; }
  .all { height: 39px; width: 136px; margin-right: 12px; border: 1px solid #e0dfe5; border-radius: 5px; background: #fff; font: 500 15px/24px Roboto, sans-serif; color: #2b22c0; }

  .toast { position: absolute; top: 45px; left: 50%; transform: translateX(-50%); height: 53px; padding: 0 38px; display: flex; align-items: center; gap: 7px; background: rgba(66, 67, 75, .93); color: #fff; font: 18px/24px 'Open Sans', 'Noto Sans', sans-serif; white-space: nowrap; }
  .toast kbd { font: inherit; line-height: 35px; padding: 0 4px; border: 1px solid #fff; border-radius: 3px; }

  .dock { position: absolute; left: 64px; right: 64px; bottom: 0; height: 90px; display: flex; justify-content: center; border-radius: 5px 5px 0 0; border-top: 1px solid #8d8888; background: linear-gradient(90deg, #6c6367, #7b706d 20%, #a3967e 34%, #c2b893 48%, #d0c6a2 57%, #a99f88 68%, #80796f 80%, #6a6366); }
  .app { position: relative; flex: 0 1 76px; display: flex; flex-direction: column; align-items: center; padding-top: 10px; }
  .app svg { font-family: 'Liberation Sans', sans-serif; }
  .quote { font-family: 'Liberation Serif', serif; }
  .mono { font-family: 'Liberation Mono', monospace; }
  .dsep { width: 36px; background: linear-gradient(#5b564c, #5b564c) center 12px / 1px 62px no-repeat; }
  .run { width: 4px; height: 4px; margin-top: 6px; border-radius: 50%; background: #15130f; }
  .badge { position: absolute; right: 0; top: 6px; min-width: 27px; border-radius: 14px; background: #fa0a32; color: #fff; font: 15px/27px 'Liberation Sans', sans-serif; text-align: center; }
  .badge.wide { width: 43px; right: -1px; }

  .player { position: absolute; left: 13%; right: 13%; bottom: 12px; display: flex; align-items: flex-end; gap: 13px; }
  .play { width: 81px; height: 50px; border: 0; border-radius: 5px; background: rgba(32, 32, 34, .94); display: flex; align-items: center; justify-content: center; }
  .controls { flex: 1; display: flex; align-items: center; gap: 14px; height: 40px; padding: 0 12px; background: rgba(34, 34, 35, .9); color: #fff; }
  .track { position: relative; flex: 1; display: flex; }
  input { appearance: none; width: 100%; height: 16px; margin: 0; padding: 2px; border: 1px solid #6d6c6b; background: linear-gradient(90deg, #009fef var(--pos), #666 var(--pos) var(--load), transparent var(--load)) content-box; }
  input::-webkit-slider-thumb { appearance: none; width: 1px; height: 10px; opacity: 0; }
  .time { position: absolute; bottom: 20px; transform: translateX(-50%); padding: 0 5px; background: #fff; color: #000; font: 12px/19px 'Liberation Sans', sans-serif; }
  .time::after { content: ''; position: absolute; left: 50%; top: 100%; margin-left: -4px; border: 4px solid transparent; border-top-color: #fff; }
  .gear { margin: 0 -4px; }

  .brand { grid-column: 3; align-self: end; justify-self: center; padding-bottom: 36px; margin-right: 4px; font: 23px/26px 'Liberation Sans', sans-serif; color: #fff; }
  .brand mark { background: #fff; color: #000; }
</style>
